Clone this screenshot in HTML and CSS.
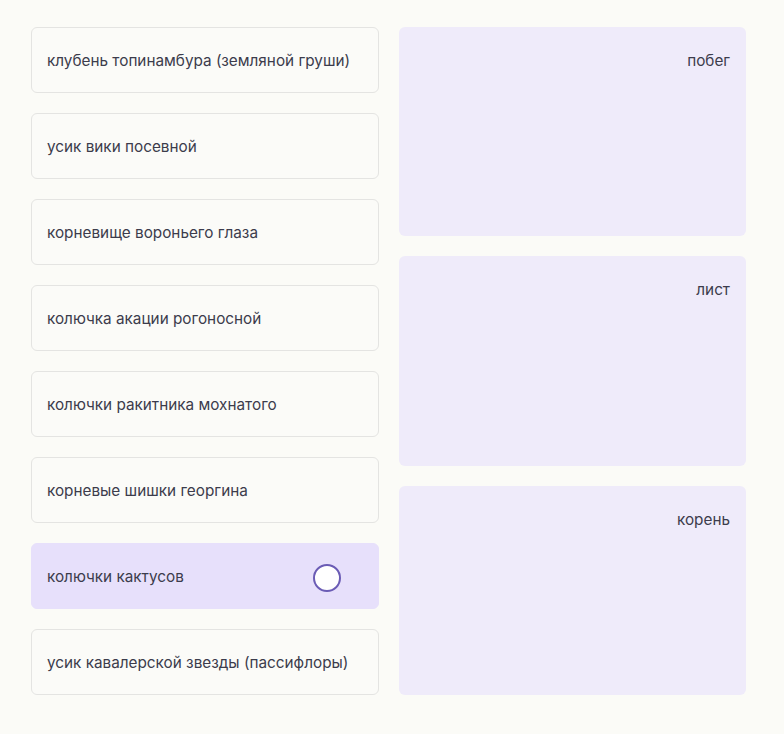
FILE: index.html
```html
<!DOCTYPE html>
<html lang="ru">
<head>
    <meta charset="UTF-8">
    <meta name="viewport" content="width=device-width, initial-scale=1.0">
    <title>Сопоставление</title>
    <link rel="stylesheet" href="styles.css">
</head>
<body>
    <div class="task">
        <div class="options">
            <div class="option">клубень топинамбура (земляной груши)</div>
            <div class="option">усик вики посевной</div>
            <div class="option">корневище вороньего глаза</div>
            <div class="option">колючка акации рогоносной</div>
            <div class="option">колючки ракитника мохнатого</div>
            <div class="option">корневые шишки георгина</div>
            <div class="option selected">колючки кактусов<span class="handle"></span></div>
            <div class="option">усик кавалерской звезды (пассифлоры)</div>
        </div>
        <div class="targets">
            <div class="target">побег</div>
            <div class="target">лист</div>
            <div class="target">корень</div>
        </div>
    </div>
</body>
</html>
```

FILE: styles.css
```css
body {
    font-family: 'Inter', 'Liberation Sans', sans-serif;
    margin: 0;
    padding: 0;
    background-color: #fbfbf7;
    color: #3c3c4c;
}
.task {
    display: flex;
    gap: 20px;
    padding: 27px 0 0 31px;
}
.options {
    display: flex;
    flex-direction: column;
    gap: 20px;
    width: 348px;
}
.option {
    box-sizing: border-box;
    height: 66px;
    display: flex;
    align-items: center;
    justify-content: space-between;
    padding: 0 15px;
    border: 1px solid #e4e4e2;
    border-radius: 6px;
    background-color: #fbfbf8;
    font-size: 15.3px;
    white-space: nowrap;
}
.option.selected {
    background-color: #e7e0fb;
    border-color: #e7e0fb;
}
.handle {
    width: 24px;
    height: 24px;
    margin: 4px 22px 0 0;
    border: 2px solid #6b5cb5;
    border-radius: 50%;
    background-color: #fff;
}
.targets {
    display: flex;
    flex-direction: column;
    gap: 20px;
    width: 347px;
    height: 668px;
}
.target {
    flex: 1;
    box-sizing: border-box;
    padding: 24px 16px 0 16px;
    text-align: right;
    background-color: #efebfa;
    border-radius: 6px;
    font-size: 15.3px;
}
```
